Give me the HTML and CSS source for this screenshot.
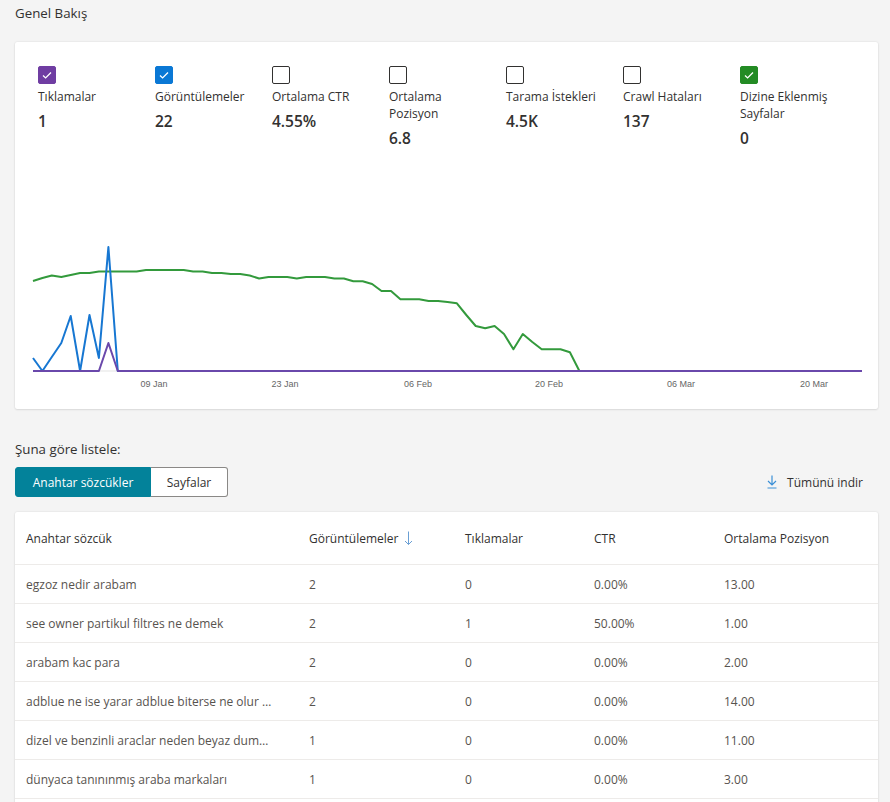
FILE: index.html
```html
<!DOCTYPE html>
<html>
<head>
<meta charset="utf-8">
<link rel="stylesheet" href="styles.css">
</head>
<body>
    <h2 class="page-title">Genel Bakış</h2>

    <div class="card overview">
        <div class="metrics">
            <div class="metric">
                <span class="box box-purple"><svg viewBox="0 0 18 18"><path d="M5 9.5l2.6 2.4 5.4-5.4"/></svg></span>
                <div class="metric-label">Tıklamalar</div>
                <div class="metric-value">1</div>
            </div>
            <div class="metric">
                <span class="box box-blue"><svg viewBox="0 0 18 18"><path d="M5 9.5l2.6 2.4 5.4-5.4"/></svg></span>
                <div class="metric-label">Görüntülemeler</div>
                <div class="metric-value">22</div>
            </div>
            <div class="metric">
                <span class="box"></span>
                <div class="metric-label">Ortalama CTR</div>
                <div class="metric-value">4.55%</div>
            </div>
            <div class="metric">
                <span class="box"></span>
                <div class="metric-label">Ortalama Pozisyon</div>
                <div class="metric-value">6.8</div>
            </div>
            <div class="metric">
                <span class="box"></span>
                <div class="metric-label">Tarama İstekleri</div>
                <div class="metric-value">4.5K</div>
            </div>
            <div class="metric">
                <span class="box"></span>
                <div class="metric-label">Crawl Hataları</div>
                <div class="metric-value">137</div>
            </div>
            <div class="metric">
                <span class="box box-green"><svg viewBox="0 0 18 18"><path d="M5 9.5l2.6 2.4 5.4-5.4"/></svg></span>
                <div class="metric-label">Dizine Eklenmiş Sayfalar</div>
                <div class="metric-value">0</div>
            </div>
        </div>

        <svg class="chart" width="863" height="200" viewBox="0 0 863 200">
            <line class="axis" x1="18" y1="171" x2="847" y2="171"/>
            <polyline class="line-green" points="18,81 27.4,78 36.8,75.5 46.3,77 55.7,75 65.1,73 74.5,73 83.9,71.5 93.4,71.5 102.8,71.5 112.2,71.5 121.6,71.5 131,70 140.5,70 149.9,70 159.3,70 168.7,70 178.1,71.5 187.6,71.5 197,73 206.4,73 215.8,74 225.2,74 234.7,75.5 244.1,78.5 253.5,77 262.9,77 272.3,77 281.8,78.5 291.2,77 300.6,77 310,77 319.4,78.5 328.9,78.5 338.3,81.3 347.7,81.3 357.1,84 366.5,91 376,91 385.4,99.3 394.8,99.3 404.2,99.3 413.6,101 423.1,101 432.5,102 441.9,103.3 451.3,115 460.7,126 470.2,128.3 479.6,126 489,134 498.4,149.3 507.8,134 517.3,142 526.7,149.3 536.1,149.3 545.5,149.3 554.9,152.3 564.4,171 847,171"/>
            <polyline class="line-blue" points="18,158 27.4,171 36.8,157 46.3,143 55.7,116 65.1,171 74.5,115 83.9,158 93.4,47 102.8,171 847,171"/>
            <polyline class="line-purple" points="18,171 83.9,171 93.4,143 102.8,171 847,171"/>
            <text x="139" y="187">09 Jan</text>
            <text x="270" y="187">23 Jan</text>
            <text x="403" y="187">06 Feb</text>
            <text x="534" y="187">20 Feb</text>
            <text x="666" y="187">06 Mar</text>
            <text x="799" y="187">20 Mar</text>
        </svg>
    </div>

    <h3 class="list-title">Şuna göre listele:</h3>
    <div class="toolbar">
        <div class="toggle">
            <button class="tab tab-active">Anahtar sözcükler</button>
            <button class="tab">Sayfalar</button>
        </div>
        <a class="download" href="#">
            <svg width="12" height="14" viewBox="0 0 12 14"><path d="M6 0.5v9.5M2 6l4 4 4-4M1.5 13h9"/></svg>
            Tümünü indir
        </a>
    </div>

    <div class="card table-card">
        <table class="keywords">
            <colgroup>
                <col style="width:283px">
                <col style="width:156px">
                <col style="width:129px">
                <col style="width:130px">
                <col>
            </colgroup>
            <tr class="head">
                <th>Anahtar sözcük</th>
                <th>Görüntülemeler <svg class="sort" width="9" height="15" viewBox="0 0 9 15"><path d="M4.5 0.5v13M1 10l3.5 3.5L8 10"/></svg></th>
                <th>Tıklamalar</th>
                <th>CTR</th>
                <th>Ortalama Pozisyon</th>
            </tr>
            <tr>
                <td>egzoz nedir arabam</td><td>2</td><td>0</td><td>0.00%</td><td>13.00</td>
            </tr>
            <tr>
                <td>see owner partikul filtres ne demek</td><td>2</td><td>1</td><td>50.00%</td><td>1.00</td>
            </tr>
            <tr>
                <td>arabam kac para</td><td>2</td><td>0</td><td>0.00%</td><td>2.00</td>
            </tr>
            <tr>
                <td>adblue ne ise yarar adblue biterse ne olur …</td><td>2</td><td>0</td><td>0.00%</td><td>14.00</td>
            </tr>
            <tr>
                <td>dizel ve benzinli araclar neden beyaz dum…</td><td>1</td><td>0</td><td>0.00%</td><td>11.00</td>
            </tr>
            <tr>
                <td>dünyaca tanınınmış araba markaları</td><td>1</td><td>0</td><td>0.00%</td><td>3.00</td>
            </tr>
        </table>
    </div>
</body>
</html>
```

FILE: styles.css
```css
body {
    margin: 0;
    padding: 0 12px 0 15px;
    background: #f4f4f4;
    font-family: "Open Sans", sans-serif;
    font-size: 12px;
    color: #323130;
}
.page-title {
    margin: 3px 0 19px;
    font-size: 13.3px;
    font-weight: normal;
    line-height: 20px;
}
.card {
    background: #fff;
    border-radius: 2px;
    box-shadow: 0 0 2px rgba(0,0,0,0.12), 0 1px 2px rgba(0,0,0,0.08);
}
.overview {
    padding: 24px 0 9px;
    height: 334px;
}
.metrics {
    display: flex;
    padding-left: 23px;
}
.metric {
    width: 100px;
    padding-right: 17px;
}
.box {
    display: block;
    width: 16px;
    height: 16px;
    border: 1px solid #323130;
    border-radius: 2px;
}
.box svg {
    display: block;
    width: 18px;
    height: 18px;
    margin: -1px;
    fill: none;
    stroke: #fff;
    stroke-width: 1.3;
}
.box-purple { background: #6f3da2; border-color: #6f3da2; }
.box-blue { background: #0a78d5; border-color: #0a78d5; }
.box-green { background: #238b24; border-color: #238b24; }
.metric-label {
    margin-top: 4px;
    line-height: 17px;
}
.metric-value {
    margin-top: 6px;
    font-size: 15.5px;
    font-weight: 600;
    line-height: 20px;
}
.chart {
    display: block;
    margin-top: 52px;
}
.chart polyline {
    fill: none;
    stroke-width: 2;
    stroke-linejoin: round;
}
.chart .axis {
    stroke: #e3e3e3;
    stroke-width: 1;
}
.line-green { stroke: #339a3c; }
.line-blue { stroke: #1777d2; }
.line-purple { stroke: #6a48ab; }
.chart text {
    font-family: "Liberation Sans", Arial, sans-serif;
    font-size: 9px;
    fill: #666;
    text-anchor: middle;
}
.list-title {
    margin: 30px 0 8px;
    font-size: 13.3px;
    font-weight: normal;
    line-height: 20px;
}
.toolbar {
    display: flex;
    justify-content: space-between;
    align-items: center;
    height: 30px;
}
.toggle {
    display: flex;
}
.tab {
    width: 77px;
    height: 30px;
    padding: 0;
    border: 1px solid #8a8886;
    border-left: none;
    border-radius: 0 3px 3px 0;
    background: #fff;
    font-family: inherit;
    font-size: 12px;
    color: #323130;
    white-space: nowrap;
}
.tab-active {
    width: 136px;
    border: 1px solid #03829a;
    border-radius: 3px 0 0 3px;
    background: #03829a;
    color: #fff;
}
.download {
    display: flex;
    align-items: center;
    gap: 9px;
    margin-right: 15px;
    color: #323130;
    text-decoration: none;
}
.download svg {
    fill: none;
    stroke: #3a8fd6;
    stroke-width: 1.2;
}
.table-card {
    margin-top: 15px;
    padding-bottom: 30px;
}
.keywords {
    width: 100%;
    table-layout: fixed;
    border-collapse: collapse;
}
.keywords th {
    height: 52px;
    padding: 0 0 0 11px;
    text-align: left;
    font-weight: normal;
    color: #323130;
    white-space: nowrap;
}
.keywords td {
    height: 38px;
    padding: 0 20px 0 11px;
    border-top: 1px solid #edebe9;
    color: #57534f;
    white-space: nowrap;
    overflow: hidden;
    text-overflow: ellipsis;
}
.keywords tr:last-child td {
    border-bottom: 1px solid #edebe9;
}
.sort {
    vertical-align: -3px;
    margin-left: 2px;
    fill: none;
    stroke: #6a9fd4;
    stroke-width: 1;
}
```
